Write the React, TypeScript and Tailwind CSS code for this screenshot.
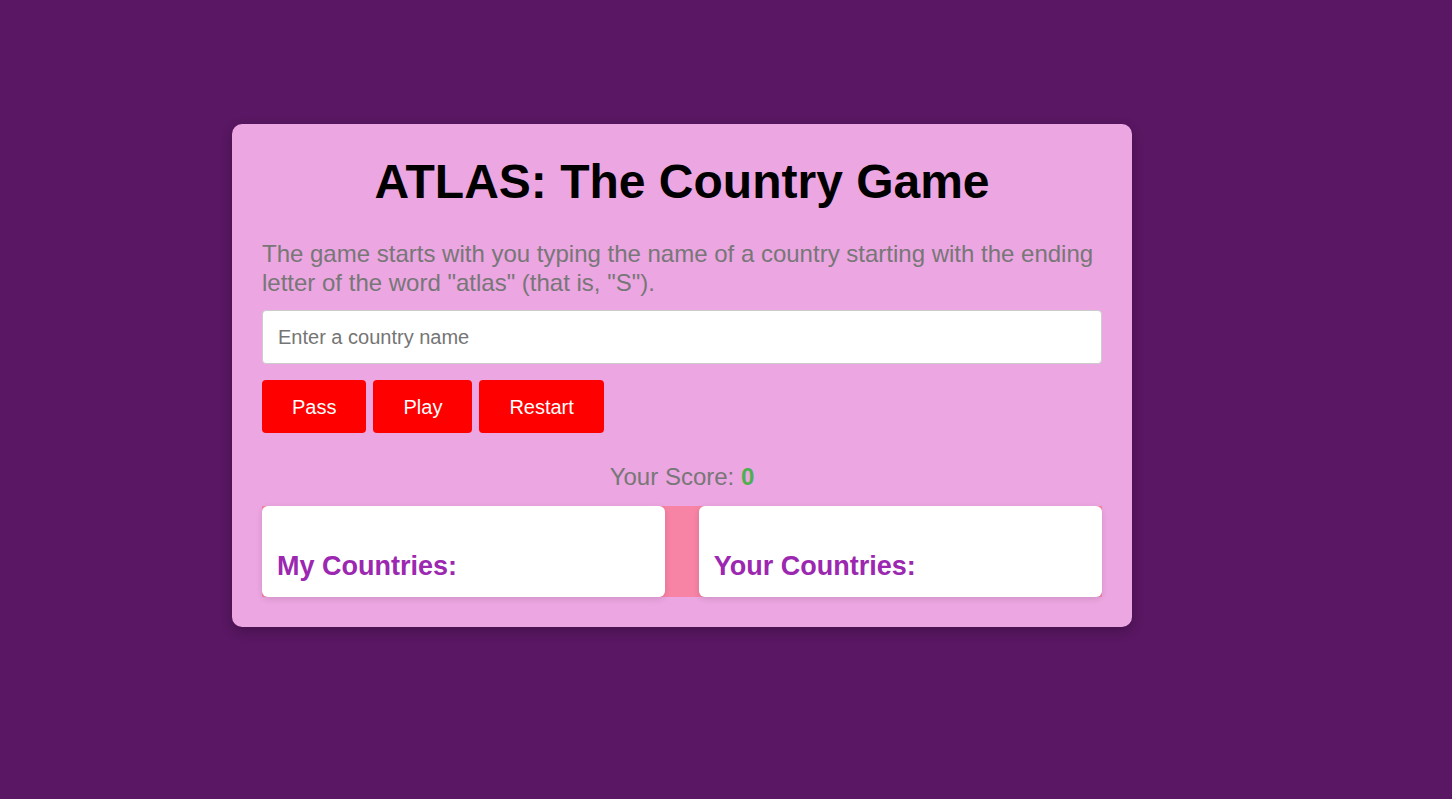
import { useState } from "react";

export default function App() {
  const [country, setCountry] = useState("");
  const [score] = useState(0);

  return (
    <div
      className="min-h-screen w-full bg-[#5a1763] pt-[124px] pl-[232px]"
      style={{ fontFamily: '"Liberation Sans", Arial, sans-serif' }}
    >
      <div className="w-[900px] rounded-[10px] bg-[#eca6e1] p-[30px] shadow-[0_4px_12px_rgba(0,0,0,0.25)]">
        <h1 className="text-center text-[48px] font-bold leading-[55px] text-black">
          ATLAS: The Country Game
        </h1>

        <p className="mt-[30px] text-[24px] leading-[29px] text-[#777777]">
          The game starts with you typing the name of a country starting with the ending
          letter of the word "atlas" (that is, "S").
        </p>

        <input
          type="text"
          value={country}
          onChange={(e) => setCountry(e.target.value)}
          placeholder="Enter a country name"
          className="mt-[13px] block h-[54px] w-full rounded-[4px] border border-[#cccccc] bg-white px-[15px] text-[20px] text-black outline-none placeholder:text-[#757575]"
        />

        <div className="mt-[16px] flex gap-[7px]">
          <button className="h-[53px] rounded-[4px] bg-[#ff0000] px-[30px] text-[20px] text-white">
            Pass
          </button>
          <button className="h-[53px] rounded-[4px] bg-[#ff0000] px-[30px] text-[20px] text-white">
            Play
          </button>
          <button className="h-[53px] rounded-[4px] bg-[#ff0000] px-[30px] text-[20px] text-white">
            Restart
          </button>
        </div>

        <div className="mt-[30px] text-center text-[24px] leading-[28px] text-[#777777]">
          Your Score: <span className="font-bold text-[#4caf50]">{score}</span>
        </div>

        <div className="mt-[15px] flex justify-between bg-[#f783a5]">
          <div className="w-[48%] rounded-[6px] bg-white p-[15px] shadow-[0_2px_6px_rgba(0,0,0,0.12)]">
            <h3 className="mt-[29px] text-[27px] font-bold leading-[32px] text-[#9c27b0]">
              My Countries:
            </h3>
          </div>
          <div className="w-[48%] rounded-[6px] bg-white p-[15px] shadow-[0_2px_6px_rgba(0,0,0,0.12)]">
            <h3 className="mt-[29px] text-[27px] font-bold leading-[32px] text-[#9c27b0]">
              Your Countries:
            </h3>
          </div>
        </div>
      </div>
    </div>
  );
}
